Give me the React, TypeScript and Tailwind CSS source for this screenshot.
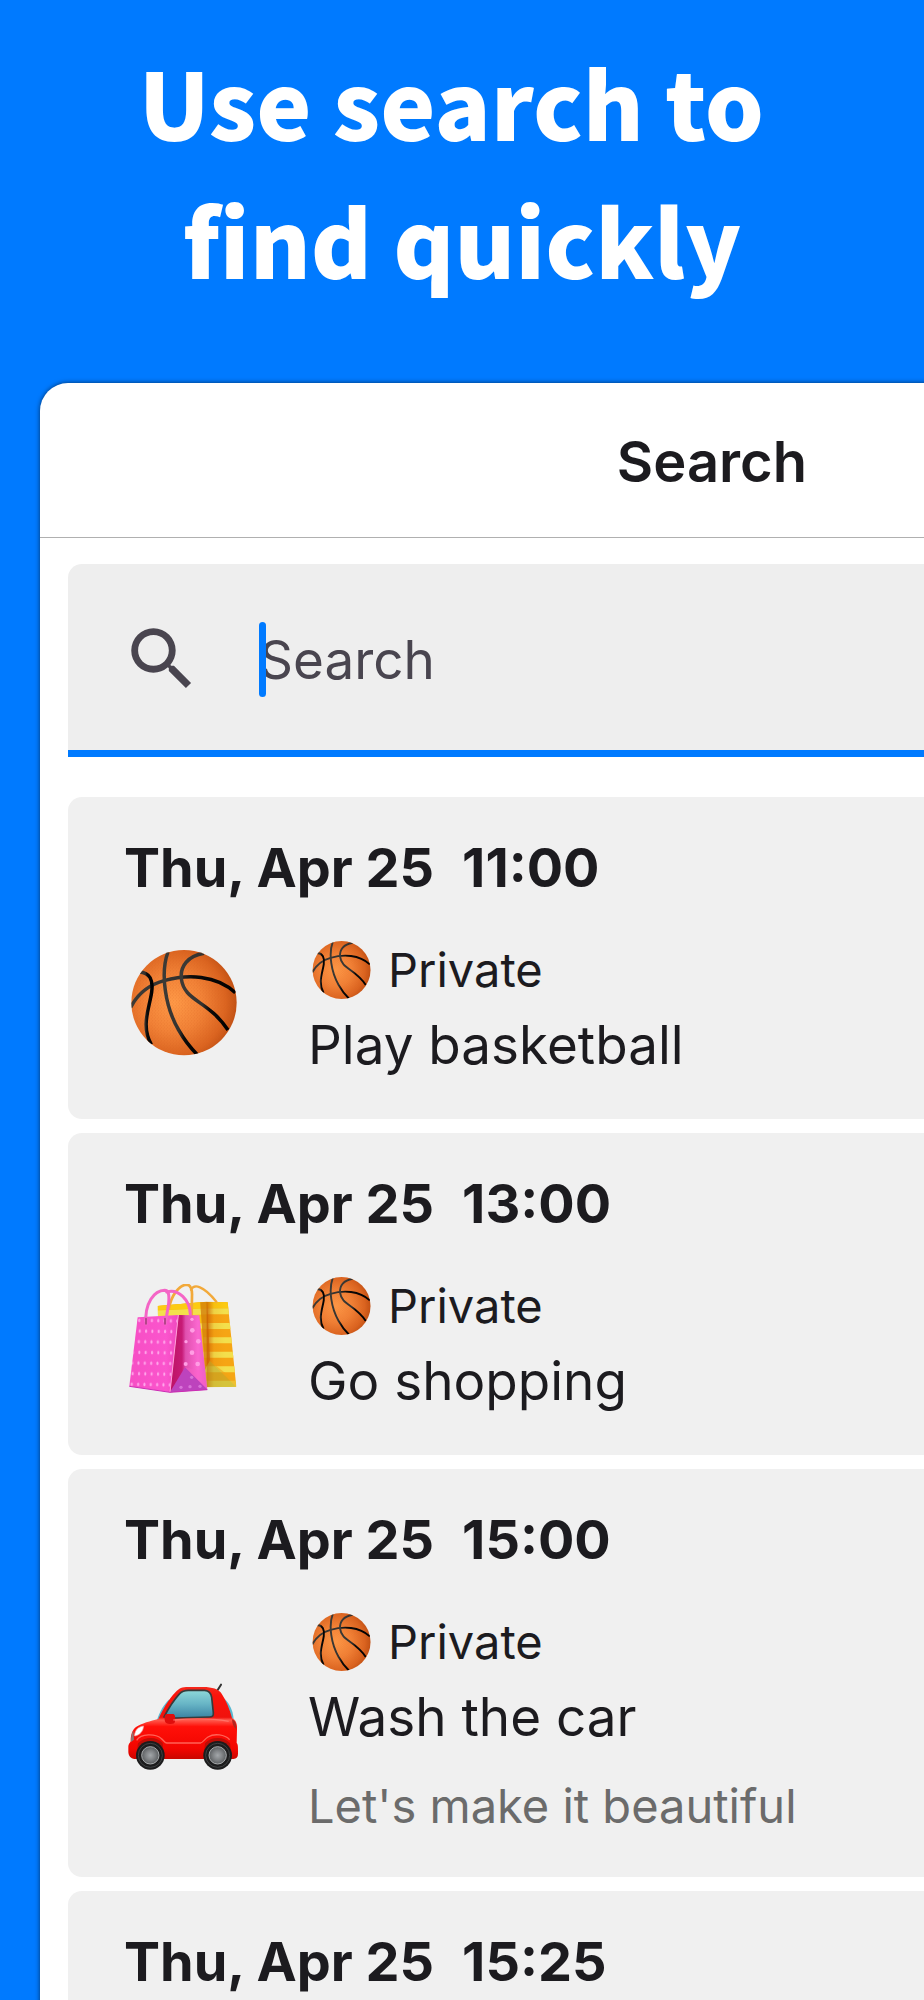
import React, { useId, useState } from 'react';

type IconName = 'basketball' | 'shopping' | 'car';

type Entry = {
  id: string;
  date: string;
  time: string;
  icon: IconName;
  category: string;
  title: string;
  note?: string;
};

const ENTRIES: Entry[] = [
  { id: '1', date: 'Thu, Apr 25', time: '11:00', icon: 'basketball', category: 'Private', title: 'Play basketball' },
  { id: '2', date: 'Thu, Apr 25', time: '13:00', icon: 'shopping', category: 'Private', title: 'Go shopping' },
  {
    id: '3',
    date: 'Thu, Apr 25',
    time: '15:00',
    icon: 'car',
    category: 'Private',
    title: 'Wash the car',
    note: "Let's make it beautiful",
  },
  { id: '4', date: 'Thu, Apr 25', time: '15:25', icon: 'basketball', category: 'Private', title: 'Play basketball' },
];

type DrawingProps = {
  className?: string;
  viewBox?: string;
};

const Basketball: React.FC<DrawingProps> = ({ className, viewBox = '42 54 360 360' }) => {
  const id = useId();
  return (
    <svg className={className} viewBox={viewBox} aria-hidden="true">
      <defs>
        <radialGradient id={`${id}ball`} cx="0.4" cy="0.5" r="0.62">
          <stop offset="0" stopColor="#ff9a48" />
          <stop offset="0.45" stopColor="#f28237" />
          <stop offset="0.8" stopColor="#db6420" />
          <stop offset="1" stopColor="#bd4d12" />
        </radialGradient>
        <linearGradient id={`${id}seam`} x1="0" y1="0" x2="1" y2="0">
          <stop offset="0" stopColor="#3c3a36" />
          <stop offset="0.45" stopColor="#34322f" />
          <stop offset="0.6" stopColor="#0c0b0a" />
          <stop offset="1" stopColor="#000000" />
        </linearGradient>
        <pattern id={`${id}grain`} width="9" height="10" patternUnits="userSpaceOnUse">
          <circle cx="2" cy="2" r="1.5" fill="#d45f1d" opacity="0.45" />
          <circle cx="6.5" cy="7" r="1.5" fill="#d45f1d" opacity="0.45" />
        </pattern>
        <clipPath id={`${id}clip`}>
          <circle cx="222" cy="218" r="158" />
        </clipPath>
      </defs>
      <circle cx="222" cy="218" r="158" fill={`url(#${id}ball)`} />
      <circle cx="222" cy="218" r="154" fill={`url(#${id}grain)`} />
      <g clipPath={`url(#${id}clip)`} fill="none" stroke={`url(#${id}seam)`} strokeWidth="10.5">
        <path d="M62 232C84 190 118 164 162 152C232 132 318 134 376 188" />
        <path d="M174 66C150 130 166 232 206 300C224 332 240 352 262 374" />
        <path d="M282 70C234 78 210 108 214 146C222 214 294 210 354 300" />
        <path d="M88 126C120 128 130 150 125 186C118 236 92 286 124 344" />
      </g>
    </svg>
  );
};

const ShoppingBags: React.FC<DrawingProps> = ({ className }) => {
  const id = useId();
  return (
    <svg className={className} viewBox="42 72 360 360" aria-hidden="true">
      <defs>
        <linearGradient id={`${id}pink`} x1="0" y1="0" x2="1" y2="0">
          <stop offset="0" stopColor="#f64ec4" />
          <stop offset="0.75" stopColor="#fb55cd" />
          <stop offset="1" stopColor="#ee48bd" />
        </linearGradient>
        <linearGradient id={`${id}side`} x1="0" y1="0" x2="1" y2="0">
          <stop offset="0" stopColor="#bc1263" />
          <stop offset="0.32" stopColor="#c71a76" />
          <stop offset="0.42" stopColor="#e050af" />
          <stop offset="0.75" stopColor="#fb68d0" />
          <stop offset="1" stopColor="#e85bc2" />
        </linearGradient>
        <linearGradient id={`${id}shade`} x1="0" y1="0" x2="1" y2="0">
          <stop offset="0" stopColor="#c65a00" stopOpacity="0.75" />
          <stop offset="0.4" stopColor="#c65a00" stopOpacity="0.1" />
          <stop offset="1" stopColor="#c65a00" stopOpacity="0" />
        </linearGradient>
        <pattern id={`${id}dots`} width="19" height="64" patternUnits="userSpaceOnUse" patternTransform="translate(76 168) rotate(1)">
          <ellipse cx="12" cy="13" rx="3" ry="5.5" fill="#ffa6ea" />
          <ellipse cx="14" cy="45" rx="3" ry="5.5" fill="#ffa6ea" />
        </pattern>
        <clipPath id={`${id}back`}>
          <path d="M143 138L290 125L353 127L379 380L292 382L150 380Z" />
        </clipPath>
        <clipPath id={`${id}sideClip`}>
          <path d="M205 165L268 166L292 389L180 397Z" />
        </clipPath>
      </defs>

      {/* Yellow bag */}
      <g clipPath={`url(#${id}back)`}>
        <path d="M130 110H390V400H130Z" fill="#f6a514" />
        <path d="M130 110H290V400H130Z" fill="#f8bd11" />
        <path
          d="M130 152L290 145H390V163H290L130 172ZM130 196L290 189H390V207H290ZM280 232H390V250H280ZM280 275H390V293H280ZM280 319H390V337H280ZM280 362H390V382H280Z"
          fill="#f3df4c"
        />
        <path d="M130 110H390V145H290L130 150Z" fill="#fccb12" />
        <path d="M270 120L291 124L300 300L285 330Z" fill="#d17a09" opacity="0.75" />
        <path d="M290 110H345V400H290Z" fill={`url(#${id}shade)`} />
        <path d="M300 303L380 382H288L282 330Z" fill="#b7a72a" opacity="0.5" />
        <path d="M300 303L380 366V382Z" fill="#eda51a" opacity="0.55" />
      </g>
      <path d="M177 145C184 105 208 75 230 74C243 74 247 91 246 108L245 164" fill="none" stroke="#f2a93a" strokeWidth="8" strokeLinecap="round" />
      <path d="M243 89C252 71 280 76 319 125" fill="none" stroke="#f2a93a" strokeWidth="7" strokeLinecap="round" />

      {/* Pink bag */}
      <path d="M205 165L268 166L292 389L180 397Z" fill={`url(#${id}side)`} />
      <g clipPath={`url(#${id}sideClip)`}>
        <path d="M225 322L294 390L178 399Z" fill="#bd43bd" />
        <path d="M225 322L294 390L287 335Z" fill="#f95fc8" opacity="0.4" />
        <g fill="#ff9ee4">
          <circle cx="246" cy="178" r="5" />
          <circle cx="247" cy="211" r="7" />
          <circle cx="228" cy="245" r="5" />
          <circle cx="265" cy="244" r="7" />
          <circle cx="246" cy="278" r="7" />
          <circle cx="227" cy="312" r="6" />
          <circle cx="263" cy="312" r="7" />
        </g>
        <g fill="#d873d8">
          <circle cx="245" cy="352" r="5" />
          <circle cx="240" cy="380" r="5" />
          <circle cx="270" cy="379" r="5" />
          <circle cx="213" cy="382" r="5" />
        </g>
      </g>
      <path d="M83 172L205 165L180 397L58 379Z" fill={`url(#${id}pink)`} />
      <path d="M83 172L205 165L180 397L58 379Z" fill={`url(#${id}dots)`} />
      <path d="M205 165L180 397" stroke="#ff9bdd" strokeWidth="3" />
      <path d="M58 379L180 397L292 389" fill="none" stroke="#cb2db4" strokeWidth="3" />
      <g fill="none" strokeLinecap="round">
        <path d="M108 192C103 128 133 92 164 91C176 91 178 105 176 130L166 192" stroke="#f465c6" strokeWidth="9" />
        <path d="M170 96C205 85 240 120 241 163" stroke="#f465c6" strokeWidth="9" />
        <path d="M108 176V192M165 176V192" stroke="#a8407f" strokeWidth="5" />
      </g>
    </svg>
  );
};

const Wheel: React.FC<{ cx: number; fill: string }> = ({ cx, fill }) => (
  <g>
    <circle cx={cx} cy="286" r="43" fill="#1c1c1d" />
    <circle cx={cx} cy="286" r="36" fill="none" stroke="#3f4142" strokeWidth="3" />
    <circle cx={cx} cy="286" r="26" fill={fill} stroke="#a9acae" strokeWidth="3" />
  </g>
);

const Car: React.FC<DrawingProps> = ({ className }) => {
  const id = useId();
  return (
    <svg className={className} viewBox="42 9 360 360" aria-hidden="true">
      <defs>
        <linearGradient id={`${id}body`} x1="0" y1="0" x2="0" y2="1">
          <stop offset="0" stopColor="#f5281c" />
          <stop offset="0.12" stopColor="#fb140c" />
          <stop offset="0.42" stopColor="#f0120c" />
          <stop offset="0.46" stopColor="#ff5a4d" />
          <stop offset="0.55" stopColor="#ff1009" />
          <stop offset="0.86" stopColor="#f20500" />
          <stop offset="1" stopColor="#c90600" />
        </linearGradient>
        <linearGradient id={`${id}glass`} x1="0" y1="0" x2="0" y2="1">
          <stop offset="0" stopColor="#8ed8da" />
          <stop offset="0.5" stopColor="#67b4c5" />
          <stop offset="1" stopColor="#3a83a3" />
        </linearGradient>
        <radialGradient id={`${id}hub`}>
          <stop offset="0" stopColor="#a3a7aa" />
          <stop offset="0.5" stopColor="#828588" />
          <stop offset="1" stopColor="#5b5e60" />
        </radialGradient>
      </defs>
      <path d="M321 93L333 74" stroke="#333333" strokeWidth="6" strokeLinecap="round" />
      <path d="M140 183C149 154 162 133 178 118L170 172Z" fill="#58b8d0" />
      <path d="M345 118C360 134 368 150 371 177L352 168Z" fill="#58b8d0" />
      <path
        d="M55 262C55 251 60 250 62 244C62 221 68 209 78 201C94 190 122 183 145 177C158 151 174 119 197 96C207 85 216 81 235 81H280C306 81 326 87 335 101C349 122 359 147 366 174C376 179 382 188 381 207L380 249C384 253 384 259 384 281C384 291 380 296 370 297H74C61 295 56 288 55 276Z"
        fill={`url(#${id}body)`}
      />
      <path d="M162 171C174 148 189 123 209 101C216 93 222 91 235 91H284C297 92 303 98 305 112L310 158C311 169 307 171 298 171L194 174Z" fill={`url(#${id}glass)`} stroke="#373b3b" strokeWidth="5" strokeLinejoin="round" />
      <path d="M73 227C76 208 85 200 101 198C99 214 90 225 75 228Z" fill="#ffffff" stroke="#f09a94" strokeWidth="2" />
      <path d="M63 246C62 229 66 218 70 212L72 239Z" fill="#8f7672" />
      <path d="M80 241C93 220 136 221 153 235C161 240 162 247 170 249H272C280 246 283 238 294 231C314 219 344 224 359 239" fill="none" stroke="#ff6257" strokeWidth="4" />
      <path d="M84 250C105 229 139 229 158 249L162 297H78ZM285 250C303 229 343 229 360 250L366 297H280Z" fill="#bd0d06" />
      <path d="M366 178C376 181 380 191 378 207C370 201 367 192 366 178Z" fill="#b4241e" />
      <path d="M169 162H190C195 164 196 169 195 184C194 191 190 192 182 192C170 192 165 188 164 179C163 170 164 165 169 162Z" fill="#df0d0c" />
      <path d="M190 180C250 175 310 176 356 184" fill="none" stroke="#ff8177" strokeWidth="4" opacity="0.7" />
      <Wheel cx={121} fill={`url(#${id}hub)`} />
      <Wheel cx={323} fill={`url(#${id}hub)`} />
    </svg>
  );
};

const EntryIcon: React.FC<{ name: IconName }> = ({ name }) => {
  const size = 'w-[120px] h-[120px] shrink-0';
  if (name === 'shopping') return <ShoppingBags className={size} />;
  if (name === 'car') return <Car className={size} />;
  return <Basketball className={size} />;
};

const EntryCard: React.FC<{ entry: Entry }> = ({ entry }) => (
  <li className="rounded-[14px] bg-[#f0f0f0] pt-10 pb-9 px-14">
    <h3 className="flex gap-7 text-[54px] leading-[62px] font-bold">
      <span>{entry.date}</span>
      <span>{entry.time}</span>
    </h3>
    <div className="mt-[34px] flex items-center gap-16">
      <EntryIcon name={entry.icon} />
      <div>
        <div className="flex items-center gap-4">
          <Basketball className="w-16 h-16 shrink-0" viewBox="39 44 349 349" />
          <span className="text-[47px] leading-[74px]">{entry.category}</span>
        </div>
        <p className="text-[53px] leading-[76px]">{entry.title}</p>
        {entry.note && <p className="mt-4 text-[47px] leading-[70px] text-[#6b6b6b]">{entry.note}</p>}
      </div>
    </div>
  </li>
);

export default function App() {
  const [query, setQuery] = useState('');

  return (
    <div className="flex h-screen flex-col overflow-hidden bg-[#007aff] font-['Inter',sans-serif] text-[#1c1b1f]">
      <h1 className="pt-8 pb-[75px] text-center text-[93px] leading-[138px] font-black whitespace-pre text-white font-['Noto_Sans_CJK_SC',sans-serif]">
        {'Use search to \nfind quickly'}
      </h1>

      {/* Phone screen, runs off the right edge */}
      <main className="ml-10 w-[145%] flex-1 rounded-tl-[28px] bg-white shadow-[0_0_5px_rgba(0,0,0,0.6)]">
        <header className="flex h-[155px] items-center justify-center border-b border-[#b0b0b0] pt-1 pl-1">
          <h2 className="text-[56px] leading-[64px] font-semibold">Search</h2>
        </header>

        <div className="px-7 pt-[26px]">
          <label className="flex h-[193px] items-center gap-14 rounded-t-[14px] border-b-7 border-[#007aff] bg-[#eeeeee] pt-1 pl-[53px] text-[#49454f]">
            <svg className="h-[82px] w-[82px] shrink-0" viewBox="0 0 24 24" fill="currentColor" aria-hidden="true">
              <path d="M9.5 3A6.5 6.5 0 0 1 16 9.5c0 1.61-.59 3.09-1.56 4.23l.27.27h.79l5 5-1.5 1.5-5-5v-.79l-.27-.27A6.52 6.52 0 0 1 9.5 16a6.5 6.5 0 0 1 0-13m0 2C7 5 5 7 5 9.5S7 14 9.5 14 14 12 14 9.5 12 5 9.5 5Z" />
            </svg>
            <span className="relative flex-1 pt-0.5">
              <input
                type="text"
                aria-label="Search"
                placeholder="Search"
                value={query}
                onChange={(e) => setQuery(e.target.value)}
                className="w-full bg-transparent text-[53px] leading-[76px] caret-[#007aff] outline-none placeholder:text-[#49454f] placeholder:opacity-100"
              />
              {!query && <span className="absolute top-0.5 left-0 h-[75px] w-[7px] rounded-full bg-[#007aff]" />}
            </span>
          </label>

          <ul className="mt-10 space-y-[14px]">
            {ENTRIES.map((entry) => (
              <EntryCard key={entry.id} entry={entry} />
            ))}
          </ul>
        </div>
      </main>
    </div>
  );
}
